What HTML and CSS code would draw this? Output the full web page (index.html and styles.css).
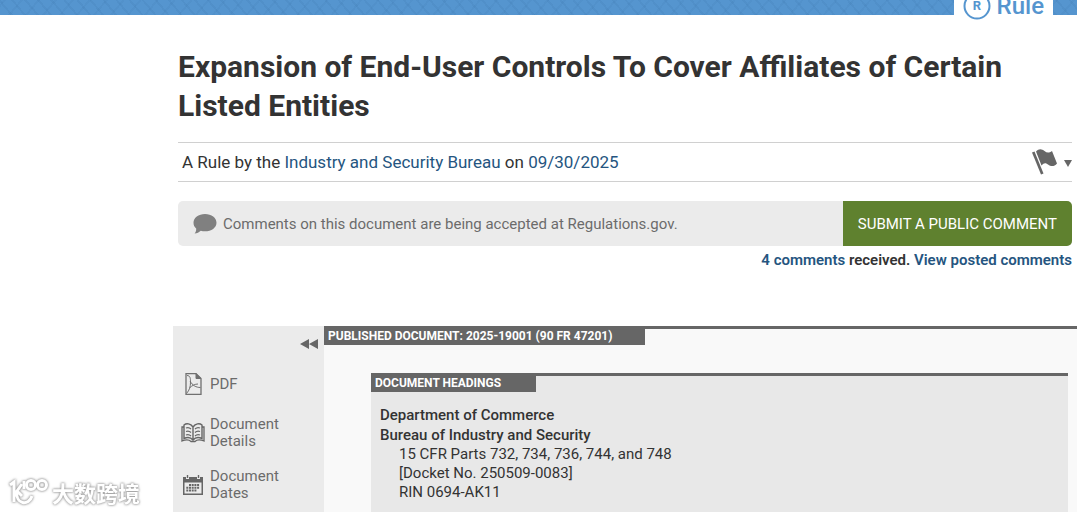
FILE: index.html
```
<!DOCTYPE html>
<html lang="en">
<head>
    <meta charset="UTF-8">
    <meta name="viewport" content="width=device-width, initial-scale=1.0">
    <title>Expansion of End-User Controls To Cover Affiliates of Certain Listed Entities</title>
    <link rel="stylesheet" href="styles.css">
</head>
<body>
    <div class="page">
        <!-- Top bar -->
        <div class="top-bar">
            <div class="doc-type">
                <svg class="rule-icon" viewBox="0 0 28 28" aria-hidden="true">
                    <circle cx="14" cy="14" r="12.5" fill="none" stroke="#5595cf" stroke-width="2"/>
                    <text x="14" y="18" text-anchor="middle">R</text>
                </svg>
                <span>Rule</span>
            </div>
        </div>

        <!-- Document header -->
        <header class="doc-header">
            <h1>Expansion of End-User Controls To Cover Affiliates of Certain Listed Entities</h1>
            <div class="meta">
                <p>A Rule by the <a href="#">Industry and Security Bureau</a> on <a href="#">09/30/2025</a></p>
                <button class="flag-btn" aria-label="Document actions">
                    <svg width="40" height="26" viewBox="0 0 40 26" fill="#666" aria-hidden="true">
                        <path d="M0 3.500 2.500 2.500 11.500 24.500 9 25.500Z"/>
                        <path d="M4 2.500C7-1 10 0 12.500 2S17 4 20 2L25 14.500C22 18 19 17.500 16 15.500S12 14 9.500 16.500Z"/>
                        <path d="M32 11h8l-4 7z"/>
                    </svg>
                </button>
            </div>

            <div class="comment-bar">
                <div class="comment-info">
                    <svg width="24" height="20" viewBox="0 0 24 20" fill="#808080" aria-hidden="true">
                        <path d="M12 0C18.500 0 23.500 3.800 23.500 8.700S18.500 17.300 12 17.300C10.500 17.300 9 17.100 7.800 16.700C6 18.200 4 19.300 1.600 19.500C2.800 18.200 3.300 16.500 3.200 14.500C1.400 13 .5 11 .5 8.700C.5 3.800 5.500 0 12 0Z"/>
                    </svg>
                    <span>Comments on this document are being accepted at Regulations.gov.</span>
                </div>
                <button class="submit-btn">SUBMIT A PUBLIC COMMENT</button>
            </div>
            <p class="comment-count"><a href="#">4 comments</a> received. <a href="#">View posted comments</a></p>
        </header>

        <!-- Sidebar and document -->
        <div class="content">
            <nav class="sidebar">
                <button class="collapse-btn" aria-label="Collapse sidebar">
                    <svg width="18" height="10" viewBox="0 0 18 10" fill="#666" aria-hidden="true">
                        <path d="M0 5 9 0V10ZM9 5 18 0V10Z"/>
                    </svg>
                </button>
                <a class="nav-item" href="#">
                    <svg width="24" height="22" viewBox="0 0 24 22" fill="none" stroke="#707070" aria-hidden="true">
                        <path stroke-width="1.300" d="M5 .7H15L20 5.500V21.300H5Z"/>
                        <path fill="#707070" d="M15 .7V5.500H20Z"/>
                        <path d="M6 2.500C9.500 2.500 9.500 6 9.500 9C9.500 14 8.500 17 5.500 20.500M9 8C11.500 12.500 15 14.500 19.500 14.500M8.500 15C11 12.500 14 11 17 11"/>
                    </svg>
                    <span>PDF</span>
                </a>
                <a class="nav-item" href="#">
                    <svg width="24" height="20" viewBox="0 0 24 20" fill="none" stroke="#666" aria-hidden="true">
                        <path stroke-width="1.400" d="M12 4C9.500 .5 5.500 0 3 2V15.500C6 14 9.500 14 12 17C14.500 14 18 14 21 15.500V2C18.500 0 14.500 .5 12 4ZM12 4V17"/>
                        <path stroke-width="1.300" d="M3 4H1V18C5 16.500 8 16.500 10 18.500H14C16 16.500 19 16.500 23 18V4H21"/>
                        <path stroke-width="1.200" d="M5 5C7 4 8.500 4.500 10 6M5 8.500C7 7.500 8.500 8 10 9.500M5 12C7 11 8.500 11.500 10 13M19 5C17 4 15.500 4.500 14 6M19 8.500C17 7.500 15.500 8 14 9.500M19 12C17 11 15.500 11.500 14 13"/>
                    </svg>
                    <span>Document Details</span>
                </a>
                <a class="nav-item" href="#">
                    <svg width="24" height="20" viewBox="0 0 24 20" fill="#666" aria-hidden="true">
                        <path fill-rule="evenodd" d="M2 2H5V4H8V2H16V4H19V2H22V20H2ZM3.500 7.500V18.500H20.500V7.500Z"/>
                        <path d="M5.800 0h1.400v3H5.800zM16.800 0h1.400v3h-1.400z"/>
                        <path d="M8 9h2v2H8zM10.700 9h2v2h-2zM13.400 9h2v2h-2zM16.100 9h2v2h-2zM5.300 11.800h2v2h-2zM8 11.800h2v2H8zM10.700 11.800h2v2h-2zM13.400 11.800h2v2h-2zM16.100 11.800h2v2h-2zM5.300 14.600h2v2h-2zM8 14.600h2v2H8zM10.700 14.600h2v2h-2zM13.400 14.600h2v2h-2z"/>
                    </svg>
                    <span>Document Dates</span>
                </a>
            </nav>

            <main class="document">
                <h2 class="box-label published">PUBLISHED DOCUMENT: 2025-19001 (90 FR 47201)</h2>
                <section class="headings">
                    <h3 class="box-label">DOCUMENT HEADINGS</h3>
                    <div class="headings-body">
                        <p class="agency">Department of Commerce</p>
                        <p class="agency">Bureau of Industry and Security</p>
                        <p class="detail">15 CFR Parts 732, 734, 736, 744, and 748</p>
                        <p class="detail">[Docket No. 250509-0083]</p>
                        <p class="detail">RIN 0694-AK11</p>
                    </div>
                </section>
            </main>
        </div>
    </div>

    <!-- Watermark -->
    <div class="watermark">
        <svg width="40" height="28" viewBox="0 0 40 28" fill="none" stroke="#fff" stroke-width="3" aria-hidden="true">
            <path d="M1 7 5 4V24M13 6 8 13C6 27 20 28 23 18M8 13 13 18"/>
            <circle cx="22" cy="7" r="4.500"/>
            <circle cx="33" cy="7" r="4.500"/>
            <path d="M15 3V11"/>
        </svg>
        <span>大数跨境</span>
    </div>
</body>
</html>
```
FILE: styles.css
```
* {
    box-sizing: border-box;
}
body {
    margin: 0;
    font-family: Roboto, Arial, sans-serif;
    font-size: 15px;
    color: #333;
    background-color: #fff;
}
h1, h2, h3, p {
    margin: 0;
}
a {
    color: #255580;
    text-decoration: none;
}
button {
    border: none;
    padding: 0;
    background: none;
    font-family: inherit;
    cursor: pointer;
}
svg {
    display: block;
    flex-shrink: 0;
}
.page {
    display: flex;
    flex-direction: column;
    min-height: 100vh;
    padding-right: 3px;
}

/* Top bar */
.top-bar {
    display: flex;
    align-items: flex-end;
    justify-content: flex-end;
    height: 15px;
    flex-shrink: 0;
    padding-right: 24px;
    background-color: #5595cf;
    background-image:
        repeating-linear-gradient(50deg, transparent 0 8px, rgba(30, 80, 130, 0.08) 8px 10px),
        repeating-linear-gradient(-50deg, transparent 0 11px, rgba(30, 80, 130, 0.06) 11px 13px);
}
.doc-type {
    display: flex;
    align-items: center;
    gap: 6px;
    height: 30px;
    margin-bottom: -6px;
    padding: 0 9px;
    background-color: #fff;
    color: #5595cf;
    font-size: 24px;
    font-weight: 500;
}
.rule-icon {
    width: 28px;
    height: 28px;
}
.rule-icon text {
    fill: #5595cf;
    font-size: 13px;
    font-weight: bold;
}

/* Document header */
.doc-header {
    flex-shrink: 0;
    padding: 32px 5px 0 178px;
}
h1 {
    font-size: 30px;
    font-weight: bold;
    line-height: 39px;
}
.meta {
    display: flex;
    justify-content: space-between;
    align-items: center;
    height: 40px;
    margin-top: 17px;
    padding-left: 4px;
    border-top: 1px solid #d0d0d0;
    border-bottom: 1px solid #d0d0d0;
    font-size: 17px;
}
.comment-bar {
    display: flex;
    height: 45px;
    margin-top: 19px;
    border-radius: 5px;
    overflow: hidden;
    background-color: #ebebeb;
    color: #6b6b6b;
}
.comment-info {
    display: flex;
    flex: 1;
    align-items: center;
    gap: 6px;
    padding-left: 15px;
}
.submit-btn {
    padding: 0 15px;
    background-color: #5f812f;
    color: #fff;
    font-size: 15px;
}
.comment-count {
    margin-top: 4px;
    line-height: 20px;
    text-align: right;
    font-weight: 600;
}

/* Sidebar and document */
.content {
    display: flex;
    flex: 1;
    margin-top: 56px;
    padding-left: 173px;
}
.sidebar {
    width: 151px;
    padding: 13px 6px 0 8px;
    background-color: #ebebeb;
}
.collapse-btn {
    display: block;
    margin-left: auto;
}
.nav-item {
    display: flex;
    align-items: center;
    gap: 5px;
    color: #6b6b6b;
    line-height: 17px;
}
.nav-item + .nav-item {
    margin-top: 18px;
}
.collapse-btn + .nav-item {
    margin: 24px 0 21px;
}
.nav-item span {
    flex: 1;
}
.document {
    display: flex;
    flex-direction: column;
    flex: 1;
    padding-right: 9px;
    border-top: 3px solid #666;
    background-color: #f9f9f9;
}
.box-label {
    width: 165px;
    padding: 0 4px 1px;
    background-color: #666;
    color: #fff;
    font-size: 12px;
    font-weight: bold;
    line-height: 15px;
}
.published {
    width: 321px;
}
.headings {
    flex: 1;
    margin: 28px 0 0 47px;
    border-top: 3px solid #666;
    background-color: #e8e8e8;
}
.headings-body {
    padding: 13px 9px 0;
    line-height: 19px;
}
.agency {
    line-height: 20px;
    font-weight: 500;
}
.detail {
    padding-left: 19px;
}

/* Watermark */
.watermark {
    position: fixed;
    left: 9px;
    bottom: 4px;
    display: flex;
    align-items: center;
    gap: 3px;
    color: #fff;
    font-family: "Noto Sans CJK SC", sans-serif;
    font-size: 22px;
    font-weight: bold;
    line-height: 32px;
    filter: drop-shadow(0 0 1px #999) drop-shadow(0 0 1px #bbb);
}
```
